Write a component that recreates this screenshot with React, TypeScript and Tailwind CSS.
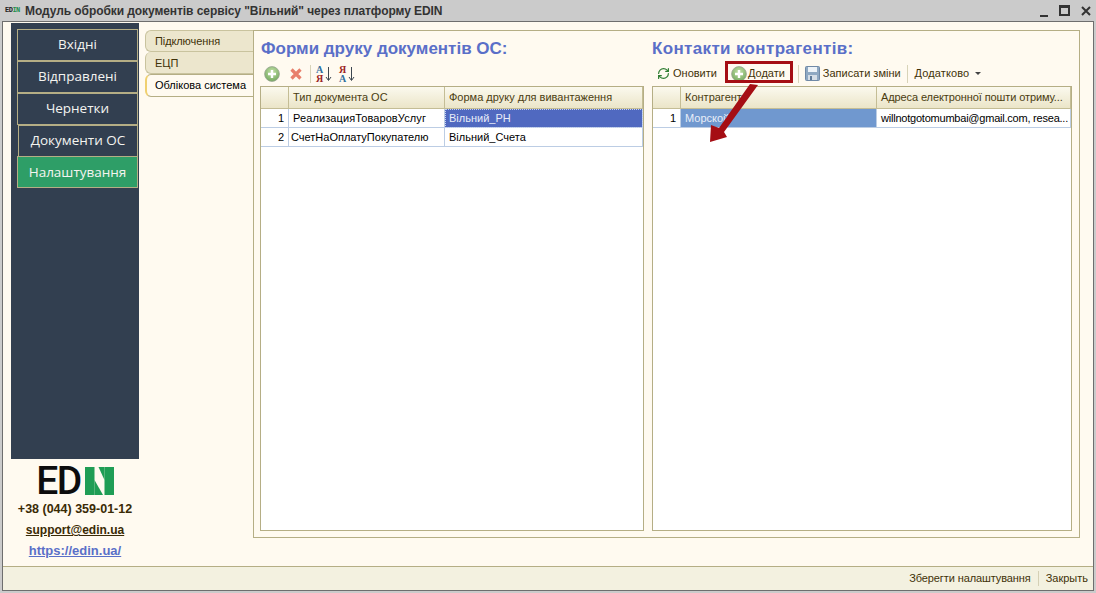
import { RefreshCw } from "lucide-react";

const sideButtons = ["Вхідні", "Відправлені", "Чернетки", "Документи ОС"];

const PlusIcon = ({ size = 16 }: { size?: number }) => (
  <svg width={size} height={size} viewBox="0 0 16 16" className="shrink-0">
    <defs>
      <radialGradient id="plusFill" cx="50%" cy="35%" r="70%">
        <stop offset="0%" stopColor="#c4e2a8" />
        <stop offset="100%" stopColor="#6fa55a" />
      </radialGradient>
    </defs>
    <circle cx="8" cy="8" r="7.4" fill="url(#plusFill)" stroke="#98a592" strokeWidth="0.8" />
    <path d="M8 4v8M4 8h8" stroke="#fff" strokeWidth="2.4" />
  </svg>
);

const CrossIcon = () => (
  <svg width="12" height="12" viewBox="0 0 12 12" className="shrink-0">
    <path d="M1.5 1.5l9 9M10.5 1.5l-9 9" stroke="#e8806c" strokeWidth="3.2" />
  </svg>
);

const SaveIcon = () => (
  <svg width="15" height="15" viewBox="0 0 15 15" className="shrink-0">
    <rect x="0.5" y="0.5" width="14" height="14" rx="1" fill="#8fa8c2" stroke="#7089a6" />
    <rect x="3" y="1" width="9" height="5" fill="#eef3f8" />
    <rect x="3" y="9" width="9" height="5" fill="#d5dde6" />
    <rect x="5" y="10" width="2" height="4" fill="#5f7a99" />
  </svg>
);

const SortIcon = ({ reverse }: { reverse?: boolean }) => (
  <span className="relative flex h-[18px] w-[16px] flex-col font-['Liberation_Serif',serif] text-[10px] leading-[9px] font-bold">
    <span className={reverse ? "text-[#9c2424]" : "text-[#2f6f9f]"}>{reverse ? "Я" : "А"}</span>
    <span className={reverse ? "text-[#2f6f9f]" : "text-[#9c2424]"}>{reverse ? "А" : "Я"}</span>
    <svg width="7" height="15" viewBox="0 0 7 15" className="absolute top-[2px] right-0">
      <path d="M3.5 0v13M1 10l2.5 3.5L6 10" stroke="#3c4650" fill="none" />
    </svg>
  </span>
);

const Divider = () => <span className="mx-[3px] block h-[18px] w-px bg-[#d8d3b8]" />;

const HeaderCell = ({ children, className = "" }: { children?: React.ReactNode; className?: string }) => (
  <div
    className={`truncate border-r border-b border-[#c4bd95] bg-gradient-to-b from-[#fbf9ee] to-[#ebe5c8] px-[4px] leading-[21px] text-[#4a3c10] ${className}`}
  >
    {children}
  </div>
);

const NumCell = ({ n, className = "leading-[18px]" }: { n: number; className?: string }) => (
  <div className={`border-r border-b border-[#bccde4] pr-[4px] text-right text-black ${className}`}>{n}</div>
);

const BodyCell = ({ children, className = "" }: { children: React.ReactNode; className?: string }) => (
  <div className={`truncate border-r border-b border-[#bccde4] px-[4px] ${className}`}>
    {children}
  </div>
);

const App = () => {
  return (
    <div className="flex h-[593px] w-[1096px] flex-col overflow-hidden bg-[#cbcbcb] font-['Liberation_Sans',sans-serif] text-[11px]">
      {/* title bar */}
      <div className="flex h-[21px] items-center pl-[5px]">
        <span className="flex w-[20px] items-center font-['Liberation_Mono',monospace] text-[7px] font-bold tracking-[-0.5px] text-[#222]">
          ED<span className="text-[#1f8f50]">IN</span>
        </span>
        <span className="text-[12px] font-bold tracking-[-0.07px] text-[#333]">
          Модуль обробки документів сервісу "Вільний" через платформу EDIN
        </span>
        <div className="mr-[5px] ml-auto flex items-center gap-[11px]">
          <span className="mt-[10px] h-[2px] w-[8px] bg-[#333]" />
          <span className="h-[11px] w-[11px] border-2 border-t-[3px] border-[#333]" />
          <svg width="10" height="10" viewBox="0 0 10 10">
            <path d="M1 1l8 8M9 1L1 9" stroke="#333" strokeWidth="2" />
          </svg>
        </div>
      </div>

      {/* window */}
      <div className="mr-[2px] mb-[2px] ml-[2px] flex min-h-0 flex-1 flex-col border border-[#6e6e6e] bg-[#fffaf0]">
        <div className="flex min-h-0 flex-1">
          {/* sidebar column */}
          <div className="ml-[8px] flex w-[128px] shrink-0 flex-col">
            <div className="mt-px flex h-[436px] flex-col bg-[#323f50] pt-[6px] pr-px pl-[6px] text-[#f4f4f0]">
              {sideButtons.map((label, i) => (
                <div
                  key={label}
                  className={`flex h-[32px] items-center justify-center border border-[#b5ae85] bg-[#323f50] pb-[2px] font-['Open_Sans',sans-serif] text-[13.5px] ${
                    i === 3 ? "-mb-px ml-px" : ""
                  }`}
                >
                  {label}
                </div>
              ))}
              <div className="flex h-[32px] items-center justify-center border border-[#b5ae85] bg-[#2e9e67] font-['Open_Sans',sans-serif] text-[13.5px]">
                Налаштування
              </div>
            </div>
            <div className="mt-[8px] flex items-center justify-center gap-[4px]">
              <span className="font-['Roboto',sans-serif] text-[39px] leading-[28px] font-medium tracking-[-1.5px] text-[#0d0d0d]">
                ED
              </span>
              <svg width="29" height="28" viewBox="0 0 29 28">
                <path d="M0 0h9.500v28H0z" fill="#1f9d55" />
                <path d="M9.500 13L18 28H9.500z" fill="#1f9d55" />
                <path d="M19.500 0h9.500v28h-9.500z" fill="#1f9d55" />
                <path d="M13.500 0h6v13z" fill="#1f9d55" />
              </svg>
            </div>
            <div className="mt-[7px] text-center text-[12.5px] leading-[15px] font-bold text-[#3a2a05]">
              +38 (044) 359-01-12
            </div>
            <div className="mt-[6px] text-center text-[12px] leading-[15px] font-bold text-[#3a2a05] underline">
              support@edin.ua
            </div>
            <div className="mt-[5px] text-center text-[13px] leading-[15px] font-bold text-[#5a6fc8] underline">
              https://edin.ua/
            </div>
          </div>

          {/* tabs */}
          <div className="mt-[8px] ml-[6px] flex w-[109px] shrink-0 flex-col text-[#3f3208]">
            <div className="h-[22px] rounded-l-[6px] border border-r-0 border-[#c9c39e] bg-[#ece6cd] pl-[9px] leading-[21px] tracking-[-0.1px]">
              Підключення
            </div>
            <div className="h-[22px] rounded-l-[6px] border border-t-0 border-r-0 border-[#c9c39e] bg-[#ece6cd] pl-[9px] leading-[22px]">
              ЕЦП
            </div>
            <div className="h-[23px] rounded-l-[6px] border-y border-l-2 border-[#b5ae85] border-l-[#f0d070] bg-[#fffaf0] pl-[8px] leading-[21px] text-black">
              Облікова система
            </div>
          </div>

          {/* panel */}
          <div className="mt-[8px] mr-[13px] mb-[28px] -ml-px flex min-w-0 flex-1 gap-[8px] border border-[#b5ae85] px-[6px] pb-[6px]">
            <div className="flex w-[384px] shrink-0 flex-col">
              <div className="mt-[8px] pl-px text-[17px] leading-[20px] font-bold text-[#5a6fc8]">
                Форми друку документів ОС:
              </div>
              <div className="mt-[4px] flex h-[21px] items-center pl-[4px]">
                <PlusIcon />
                <span className="ml-[10px]"><CrossIcon /></span>
                <span className="ml-[5px]"><Divider /></span>
                <span className="ml-[2px]"><SortIcon /></span>
                <span className="ml-[7px]"><SortIcon reverse /></span>
              </div>
              <div className="mt-[2px] min-h-0 flex-1 border border-[#b5ae85] bg-white">
                <div className="grid grid-cols-[28px_156px_1fr]">
                  <HeaderCell />
                  <HeaderCell>Тип документа ОС</HeaderCell>
                  <HeaderCell>Форма друку для вивантаження</HeaderCell>
                  <NumCell n={1} />
                  <BodyCell className="leading-[18px] tracking-[0.1px] text-black">РеализацияТоваровУслуг</BodyCell>
                  <BodyCell className="bg-[#5069c0] leading-[18px] text-[#e8ecf8] outline-1 -outline-offset-1 outline-[#c9d3f0] outline-dotted">
                    Вільний_РН
                  </BodyCell>
                  <NumCell n={2} className="pt-px leading-[17px]" />
                  <BodyCell className="pt-px leading-[17px] text-black">
                    <span className="-ml-[2px]">СчетНаОплатуПокупателю</span>
                  </BodyCell>
                  <BodyCell className="pt-px leading-[17px] text-black">Вільний_Счета</BodyCell>
                </div>
              </div>
            </div>

            <div className="flex min-w-0 flex-1 flex-col pr-px">
              <div className="mt-[8px] text-[17px] leading-[20px] font-bold tracking-[0.35px] text-[#5a6fc8]">
                Контакти контрагентів:
              </div>
              <div className="relative mt-[4px] flex h-[21px] items-center pl-[5px] text-[#3f3208]">
                <RefreshCw size={13} strokeWidth={2.2} className="text-[#2f7d32]" />
                <span className="ml-[3px]">Оновити</span>
                <span className="ml-[5px]"><Divider /></span>
                <span className="ml-[2px]"><PlusIcon /></span>
                <span className="ml-[1px]"><u>Д</u>одати</span>
                <span className="ml-[10px]"><Divider /></span>
                <span className="ml-[3px]"><SaveIcon /></span>
                <span className="ml-[3px]">Записати зміни</span>
                <span className="ml-[3px]"><Divider /></span>
                <span className="ml-[4px] tracking-[0.1px]">Додатково</span>
                <span className="ml-[6px] h-0 w-0 border-x-[3px] border-t-[3px] border-x-transparent border-t-[#444]" />
                <span className="absolute top-[-2px] left-[73px] h-[22px] w-[68px] border-[3px] border-[#a50e14]" />
              </div>
              <div className="mt-[2px] min-h-0 flex-1 border border-[#b5ae85] bg-white">
                <div className="grid grid-cols-[28px_196px_1fr]">
                  <HeaderCell />
                  <HeaderCell>Контрагент</HeaderCell>
                  <HeaderCell className="pr-0 tracking-[-0.1px]">Адреса електронної пошти отриму...</HeaderCell>
                  <NumCell n={1} />
                  <BodyCell className="bg-[#7098cf] leading-[18px] text-[#e8eef8]">Морской</BodyCell>
                  <BodyCell className="pr-0 leading-[18px] tracking-[-0.22px] text-black">
                    willnotgotomumbai@gmail.com, resea...
                  </BodyCell>
                </div>
              </div>
            </div>
          </div>
        </div>

        {/* status bar */}
        <div className="flex h-[24px] shrink-0 items-center justify-end border-t border-[#b5ae85] bg-[#f3f1e0] pr-[5px] text-[#3f3208]">
          <span className="tracking-[-0.1px]">Зберегти налаштування</span>
          <span className="mx-[7px] h-[15px] w-px bg-[#d5d0b5]" />
          <span>Закрыть</span>
        </div>
      </div>

      {/* arrow annotation */}
      <svg width="70" height="70" viewBox="0 0 70 70" className="absolute top-[80px] left-[700px]">
        <path d="M50 4L58 5L24 52L27 57L10 62L11 45L19 48Z" fill="#a50e14" />
      </svg>
    </div>
  );
};

export default App;
